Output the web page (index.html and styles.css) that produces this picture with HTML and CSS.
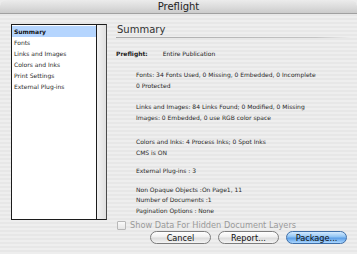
FILE: index.html
```html
<!DOCTYPE html>
<html lang="en">
<head>
    <meta charset="UTF-8">
    <meta name="viewport" content="width=device-width, initial-scale=1.0">
    <title>Preflight</title>
    <link rel="stylesheet" href="styles.css">
</head>
<body>
    <div class="window">
        <div class="titlebar">Preflight</div>

        <div class="main">
            <div class="listbox">
                <ul class="list">
                    <li class="selected">Summary</li>
                    <li>Fonts</li>
                    <li>Links and Images</li>
                    <li>Colors and Inks</li>
                    <li>Print Settings</li>
                    <li>External Plug-ins</li>
                </ul>
                <div class="scroll"></div>
            </div>

            <div class="panel">
                <h2 class="heading">Summary</h2>
                <p class="scope"><b>Preflight:</b><span>Entire Publication</span></p>

                <div class="report">
                    <p class="group g-fonts">Fonts: 34 Fonts Used, 0 Missing, 0 Embedded, 0 Incomplete<br>0 Protected</p>
                    <p class="group g-links">Links and Images: 84 Links Found; 0 Modified, 0 Missing<br>Images: 0 Embedded, 0 use RGB color space</p>
                    <p class="group g-colors">Colors and Inks: 4 Process Inks; 0 Spot Inks<br>CMS is ON</p>
                    <p class="group g-plugins">External Plug-ins : 3</p>
                    <p class="group g-other">Non Opaque Objects :On Page1, 11<br>Number of Documents :1<br>Pagination Options : None</p>
                </div>

                <label class="check">
                    <span class="box"></span>
                    Show Data For Hidden Document Layers
                </label>
            </div>
        </div>

        <div class="buttons">
            <button class="btn">Cancel</button>
            <button class="btn">Report...</button>
            <button class="btn default">Package...</button>
        </div>
    </div>
</body>
</html>
```

FILE: styles.css
```css
* {
    margin: 0;
    padding: 0;
    box-sizing: border-box;
}

body {
    font-family: "DejaVu Sans", sans-serif;
    background: #ececec;
}

.window {
    width: 357px;
    height: 254px;
    overflow: hidden;
    background: repeating-linear-gradient(to bottom, #eeeeee 0, #eeeeee 2px, #e7e7e7 2px, #e7e7e7 4px);
    border-radius: 6px 6px 0 0;
}

.titlebar {
    height: 14px;
    line-height: 14px;
    text-align: center;
    font-size: 10px;
    color: #222;
    background: linear-gradient(to bottom, #ececec, #d9d9d9 60%, #cbcbcb);
    border-bottom: 1px solid #a0a0a0;
    border-radius: 6px 6px 0 0;
}

.main {
    display: flex;
    padding: 10px 0 0 11px;
    height: 216px;
}

/* left list */
.listbox {
    display: flex;
    width: 96px;
    height: 196px;
    border: 1px solid #1c1c1c;
    border-right-color: #4a4a4a;
    background: #fff;
}

.list {
    list-style: none;
    flex: 1;
    padding-top: 1px;
    border-right: 1px solid #1c1c1c;
}

.list li {
    height: 11px;
    line-height: 11px;
    padding-left: 2px;
    font-size: 6px;
    color: #2a2a2a;
}

.list li.selected {
    background: #b5d5fe;
    color: #111;
    font-weight: bold;
}

.scroll {
    width: 9px;
    background: linear-gradient(to right, #f2f2f2, #e0e0e0);
}

/* right panel */
.panel {
    flex: 1;
    padding-left: 9px;
    padding-right: 7px;
}

.heading {
    font-size: 10px;
    font-weight: normal;
    color: #333;
    line-height: 12px;
    padding-left: 1px;
    padding-bottom: 1px;
    border-bottom: 1px solid;
    border-image: linear-gradient(to right, #a9a9a9, #c4c4c4 85%, rgba(200,200,200,0)) 1;
}

.scope {
    margin-top: 10px;
    font-size: 6px;
    line-height: 11px;
    color: #222;
}

.scope span {
    margin-left: 15px;
}

.report {
    padding-left: 20px;
    color: #2a2a2a;
}

.group {
    font-size: 6px;
    line-height: 10.5px;
}

.g-fonts { margin-top: 11px; }
.g-links { margin-top: 11px; }
.g-colors { margin-top: 14px; }
.g-plugins { margin-top: 8px; }
.g-other { margin-top: 8px; }

.check {
    display: flex;
    align-items: center;
    gap: 4px;
    margin-top: 4px;
    padding-left: 1px;
    font-size: 8.2px;
    color: #9a9a9a;
}

.box {
    width: 9px;
    height: 9px;
    border: 1px solid #b8b8b8;
    border-radius: 1px;
    background: linear-gradient(to bottom, #fafafa, #e6e6e6);
}

/* buttons */
.buttons {
    display: flex;
    justify-content: flex-end;
    gap: 7px;
    padding: 1px 10px 0 0;
}

.btn {
    width: 61px;
    height: 13px;
    font-family: "DejaVu Sans", sans-serif;
    font-size: 8.2px;
    color: #111;
    border: 1px solid #7d7d7d;
    border-radius: 7px;
    background: linear-gradient(to bottom, #ffffff, #f0f0f0 45%, #dcdcdc 55%, #f4f4f4);
}

.btn.default {
    border-color: #3f6fa8;
    background: linear-gradient(to bottom, #d5ebff, #8ec3f3 45%, #5c9ee6 55%, #a9d6ff);
}
```
